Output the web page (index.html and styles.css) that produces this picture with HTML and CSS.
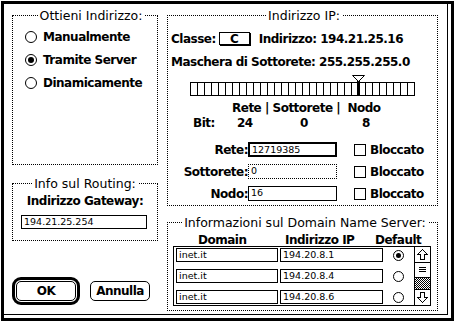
FILE: index.html
```html
<!DOCTYPE html>
<html lang="it">
<head>
    <meta charset="UTF-8">
    <meta name="viewport" content="width=device-width, initial-scale=1.0">
    <title>MacTCP - Altro</title>
    <link rel="stylesheet" href="styles.css">
</head>
<body>
<div class="dialog">
    <div class="pane">
        <div class="col">
            <fieldset class="group obtain">
                <legend>Ottieni Indirizzo:</legend>
                <div class="radio-row"><span class="radio"></span>Manualmente</div>
                <div class="radio-row"><span class="radio on"></span>Tramite Server</div>
                <div class="radio-row"><span class="radio"></span>Dinamicamente</div>
            </fieldset>

            <fieldset class="group routing">
                <legend>Info sul Routing:</legend>
                <div class="gw-label">Indirizzo Gateway:</div>
                <div class="field gw-field">194.21.25.254</div>
            </fieldset>

            <div class="buttons">
                <div class="default-ring"><div class="btn">OK</div></div>
                <div class="btn">Annulla</div>
            </div>
        </div>

        <div class="col">
            <fieldset class="group ip">
                <legend>Indirizzo IP:</legend>
                <div class="ip-row">
                    Classe:<span class="class-box">C</span><span class="addr">Indirizzo: 194.21.25.16</span>
                </div>
                <div class="ip-row mask">Maschera di Sottorete: 255.255.255.0</div>

                <!-- 32 bit slider, thumb on bit 24 -->
                <svg class="slider" width="225" height="21" shape-rendering="crispEdges">
                    <rect x="0.5" y="7.5" width="224" height="13" fill="#fff" stroke="#000"/>
                    <path stroke="#000" d="M7.5 8v12M14.5 8v12M21.5 8v12M28.5 8v12M35.5 8v12M42.5 8v12M49.5 8v12M56.5 8v12M63.5 8v12M70.5 8v12M77.5 8v12M84.5 8v12M91.5 8v12M98.5 8v12M105.5 8v12M112.5 8v12M119.5 8v12M126.5 8v12M133.5 8v12M140.5 8v12M147.5 8v12M154.5 8v12M161.5 8v12M175.5 8v12M182.5 8v12M189.5 8v12M196.5 8v12M203.5 8v12M210.5 8v12M217.5 8v12"/>
                    <rect x="167" y="6" width="3" height="15" fill="#000"/>
                    <polygon points="162.5,0.5 174.5,0.5 168.5,6.5" fill="#fff" stroke="#000" shape-rendering="auto"/>
                </svg>

                <div class="bit-head">Rete | Sottorete |  Nodo</div>
                <div class="bit-row"><span>Bit:</span><span>24</span><span>0</span><span>8</span></div>

                <div class="net-rows">
                    <div class="net-row">
                        <span class="lbl">Rete:</span>
                        <span class="field active">12719385</span>
                        <span class="check"></span>Bloccato
                    </div>
                    <div class="net-row">
                        <span class="lbl">Sottorete:</span>
                        <span class="field off">0</span>
                        <span class="check"></span>Bloccato
                    </div>
                    <div class="net-row">
                        <span class="lbl">Nodo:</span>
                        <span class="field">16</span>
                        <span class="check"></span>Bloccato
                    </div>
                </div>
            </fieldset>

            <fieldset class="group dns">
                <legend>Informazioni sul Domain Name Server:</legend>
                <div class="dns-head"><span>Domain</span><span>Indirizzo IP</span><span>Default</span></div>
                <div class="dns-table">
                    <div class="dns-rows">
                        <div class="dns-row">
                            <span class="field domain">inet.it</span>
                            <span class="field server">194.20.8.1</span>
                            <span class="radio-cell"><span class="radio small on"></span></span>
                        </div>
                        <div class="dns-row">
                            <span class="field domain">inet.it</span>
                            <span class="field server">194.20.8.4</span>
                            <span class="radio-cell"><span class="radio small"></span></span>
                        </div>
                        <div class="dns-row">
                            <span class="field domain">inet.it</span>
                            <span class="field server">194.20.8.6</span>
                            <span class="radio-cell"><span class="radio small"></span></span>
                        </div>
                    </div>
                    <div class="scroll">
                        <div class="arrow up">
                            <svg width="15" height="15" shape-rendering="crispEdges"><polygon points="7.5,2.5 12.5,7.5 9.5,7.5 9.5,12.5 5.5,12.5 5.5,7.5 2.5,7.5" fill="none" stroke="#000"/></svg>
                        </div>
                        <div class="thumb">
                            <svg width="15" height="14" shape-rendering="crispEdges"><path d="M4 4.5h7M4 6.5h7M4 8.5h7" stroke="#000"/></svg>
                        </div>
                        <div class="track"></div>
                        <div class="arrow down">
                            <svg width="15" height="15" shape-rendering="crispEdges"><polygon points="7.5,12.5 12.5,7.5 9.5,7.5 9.5,2.5 5.5,2.5 5.5,7.5 2.5,7.5" fill="none" stroke="#000"/></svg>
                        </div>
                    </div>
                </div>
            </fieldset>
        </div>
    </div>
</div>
</body>
</html>
```

FILE: styles.css
```css
body {
    margin: 0;
    background-color: #fff;
    color: #000;
    font-family: "DejaVu Sans", sans-serif;
}

/* window frame: thick outline, thin inner line right and bottom */
.dialog {
    margin: 1px 0 0 1px;
    width: 453px;
    height: 320px;
    border: 3px solid #000;
    box-sizing: border-box;
}

.pane {
    width: 444px;
    height: 311px;
    box-sizing: border-box;
    border-right: 1px solid #000;
    border-bottom: 1px solid #000;
    padding: 4px 0 0 8px;
    display: grid;
    grid-template-columns: 146px 271px;
    column-gap: 9px;
    align-items: start;
}

/* "Chicago" style system text */
.radio-row,
.gw-label,
.btn,
.ip-row,
.bit-head,
.bit-row,
.net-row,
.dns-head {
    font-weight: bold;
    font-size: 12px;
    letter-spacing: -0.5px;
}

/* dotted group boxes */
.group {
    margin: 0;
    padding: 0;
    min-width: 0;
    border: 1px dotted #000;
    box-sizing: border-box;
}

.group legend {
    margin: 0 auto;
    padding: 0 2px;
    font-size: 12.5px;
    line-height: 15px;
}

.field {
    display: block;
    border: 1px solid #000;
    box-sizing: border-box;
    font-size: 9.5px;
    line-height: 12px;
    font-weight: normal;
    letter-spacing: 0;
    padding-left: 2px;
    white-space: nowrap;
    overflow: hidden;
}

.radio {
    width: 12px;
    height: 12px;
    border: 1px solid #000;
    border-radius: 50%;
    box-sizing: border-box;
    display: flex;
    align-items: center;
    justify-content: center;
    flex: none;
}

.radio.on::after {
    content: "";
    width: 6px;
    height: 6px;
    border-radius: 50%;
    background-color: #000;
}

.radio.small {
    width: 11px;
    height: 11px;
}

.radio.small.on::after {
    width: 5px;
    height: 5px;
}

/* left column */
.obtain {
    height: 157px;
    padding: 2px 0 0 12px;
}

.radio-row {
    display: flex;
    align-items: center;
    height: 23px;
}

.radio-row .radio {
    margin-right: 6px;
}

.routing {
    margin-top: 11px;
    height: 65px;
    padding-top: 3px;
}

.gw-label {
    text-align: center;
    line-height: 15px;
}

.gw-field {
    margin: 6px 0 0 8px;
    width: 126px;
    height: 14px;
}

.buttons {
    display: flex;
    align-items: center;
    gap: 10px;
    margin-top: 36px;
}

.default-ring {
    border: 3px solid #000;
    border-radius: 9px;
    padding: 1px;
}

.btn {
    width: 60px;
    height: 20px;
    border: 1px solid #000;
    border-radius: 5px;
    box-sizing: border-box;
    display: flex;
    align-items: center;
    justify-content: center;
}

/* Indirizzo IP */
.ip {
    height: 198px;
    padding: 8px 0 0 3px;
}

.ip-row {
    display: flex;
    align-items: center;
    height: 15px;
    white-space: nowrap;
}

.class-box {
    margin-left: 3px;
    width: 31px;
    height: 13px;
    border: 1px solid #000;
    box-shadow: 1px 1px 0 #000;
    box-sizing: border-box;
    display: flex;
    align-items: center;
    justify-content: center;
}

.addr {
    margin-left: 9px;
}

.mask {
    margin-top: 8px;
}

.slider {
    display: block;
    margin: 6px 0 0 19px;
}

.bit-head {
    margin-top: 5px;
    padding-left: 61px;
    white-space: pre;
    line-height: 15px;
}

.bit-row {
    display: grid;
    grid-template-columns: 44px 63px 62px auto;
    padding-left: 22px;
    line-height: 15px;
}

.net-rows {
    margin-top: 11px;
    display: flex;
    flex-direction: column;
    gap: 7px;
}

.net-row {
    display: flex;
    align-items: center;
    height: 15px;
}

.net-row .lbl {
    width: 77px;
    text-align: right;
}

.net-row .field {
    width: 89px;
    height: 15px;
}

.field.active {
    border-width: 2px;
    line-height: 11px;
}

.field.off {
    border-style: dotted;
}

.check {
    width: 12px;
    height: 12px;
    border: 1px solid #000;
    box-sizing: border-box;
    margin: 0 4px 0 17px;
}

/* Domain Name Server */
.dns {
    margin-top: 9px;
    height: 96px;
    padding: 4px 0 0 5px;
}

.dns-head {
    display: grid;
    grid-template-columns: 87px 90px auto;
    padding-left: 25px;
    line-height: 12px;
}

.dns-table {
    display: flex;
    width: 258px;
    height: 60px;
    border: 1px solid #000;
    box-sizing: border-box;
}

.dns-rows {
    flex: 1;
    padding: 1px 0 0 2px;
    display: flex;
    flex-direction: column;
    gap: 7px;
}

.dns-row {
    display: flex;
    align-items: center;
    height: 14px;
}

.dns-row .field {
    height: 14px;
}

.field.domain {
    width: 102px;
}

.field.server {
    width: 103px;
    margin-left: 2px;
}

.radio-cell {
    width: 31px;
    display: flex;
    justify-content: center;
}

.scroll {
    width: 16px;
    border-left: 1px solid #000;
    display: flex;
    flex-direction: column;
}

.scroll svg {
    display: block;
}

.arrow.up {
    border-bottom: 1px solid #000;
}

.thumb {
    border-bottom: 1px solid #000;
}

.track {
    flex: 1;
    background: repeating-conic-gradient(#000 0 25%, #fff 0 50%) 0 0 / 2px 2px;
}

.arrow.down {
    border-top: 1px solid #000;
}
```
